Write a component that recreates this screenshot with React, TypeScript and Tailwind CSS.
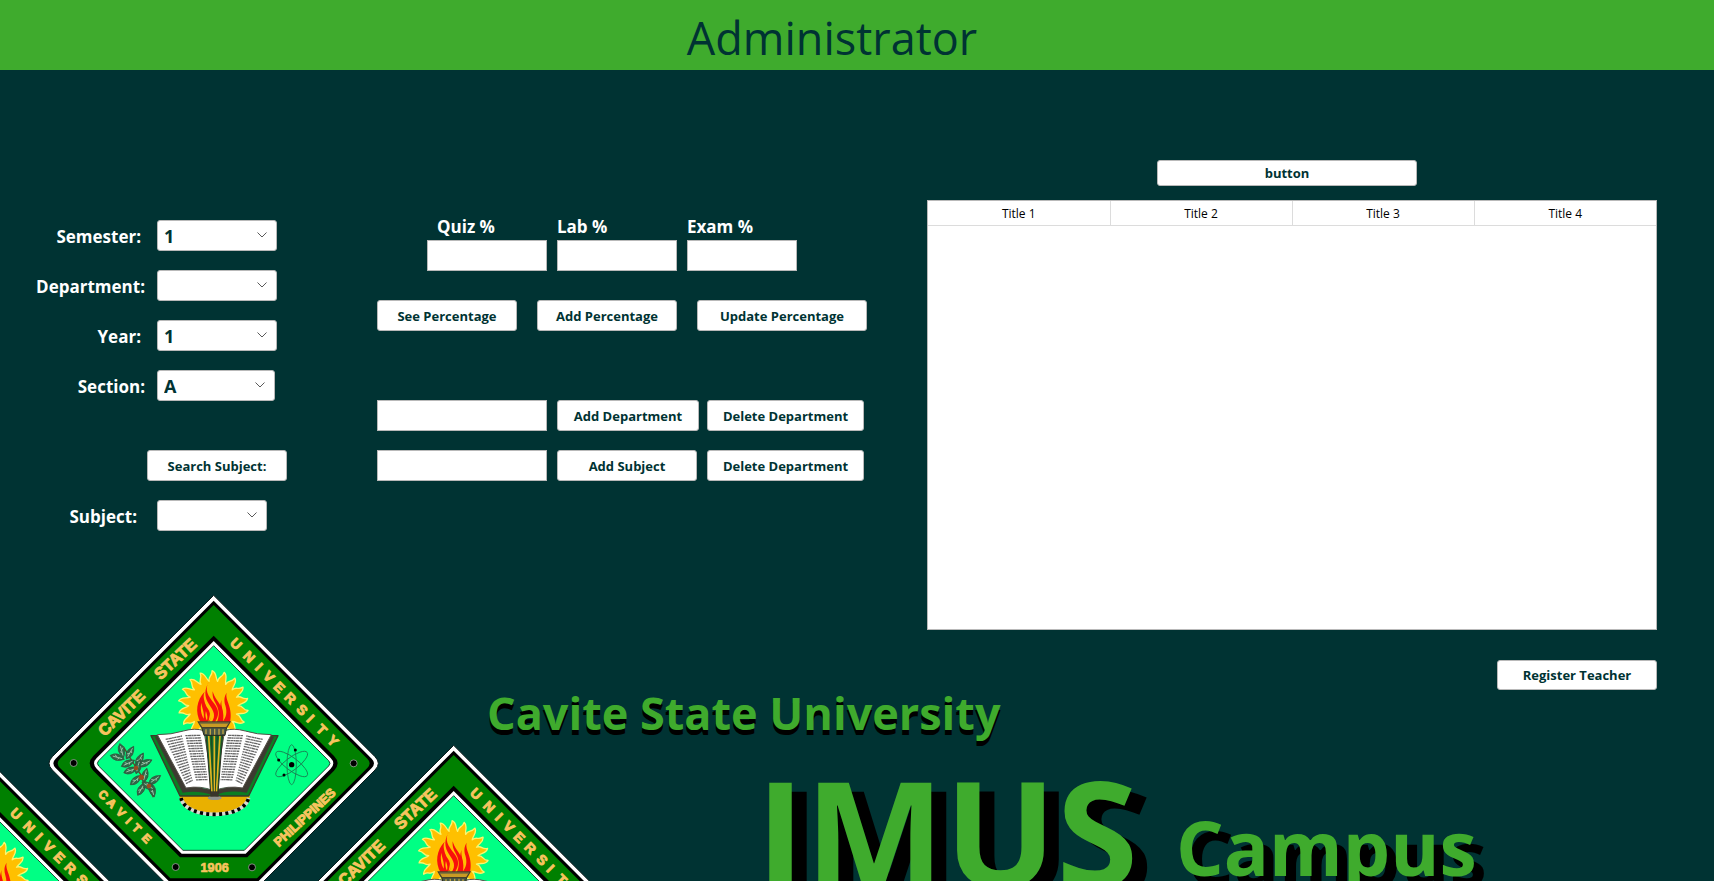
import React from "react";

const fieldBox = "h-[31px] border border-[#b9b9b9] bg-white text-[#003333]";

function ActionButton({ label, className = "" }: { label: string; className?: string }) {
  return (
    <button
      type="button"
      className={`rounded-[3px] border border-[#b9b9b9] bg-white pt-0.5 text-[13px] font-bold text-[#003333] whitespace-nowrap ${className}`}
    >
      {label}
    </button>
  );
}

type Choice = { id: string; label: string; options: string[]; gap: string; width: string };

function ChoiceRow({ id, label, options, gap, width }: Choice) {
  return (
    <div className="flex h-[31px] items-center">
      <label htmlFor={id} className={`w-[157px] pt-0.5 text-right text-[17px] font-bold text-white ${gap}`}>
        {label}
      </label>
      <div className={`relative ${width}`}>
        <select
          id={id}
          className={`${fieldBox} block w-full appearance-none rounded-[3px] pl-1.5 text-[18px] leading-none font-bold`}
        >
          {options.map((o) => (
            <option key={o}>{o}</option>
          ))}
        </select>
        <svg
          className="pointer-events-none absolute top-3 right-2.5 h-1.5 w-2.5"
          viewBox="0 0 10 6"
          fill="none"
          stroke="#5a5a5a"
          aria-hidden="true"
        >
          <path d="M0.5 0.5 L5 5 L9.5 0.5" />
        </svg>
      </div>
    </div>
  );
}

const choices: Choice[] = [
  { id: "semester", label: "Semester:", options: ["1", "2"], gap: "pr-4", width: "w-[120px]" },
  { id: "department", label: "Department:", options: [""], gap: "pr-3", width: "w-[120px]" },
  { id: "year", label: "Year:", options: ["1", "2", "3", "4"], gap: "pr-4", width: "w-[120px]" },
  { id: "section", label: "Section:", options: ["A", "B", "C"], gap: "pr-3", width: "w-[118px]" },
];

function PercentField({ id, label, pad, width }: { id: string; label: string; pad: string; width: string }) {
  return (
    <div className={`flex flex-col ${width}`}>
      <label htmlFor={id} className={`h-[27px] text-[17px] leading-[27px] font-bold text-white ${pad}`}>
        {label}
      </label>
      <input id={id} className={`${fieldBox} w-full px-2`} />
    </div>
  );
}

/* Diamond with a sharp top, rounded sides and a flat foot. */
function diamond(h: number, foot: number, r: number) {
  const x = 521;
  const y = 520;
  const w = h - (foot - y);
  return `M${x} ${y - h} L${x + h - r} ${y - r} Q${x + h} ${y} ${x + h - r} ${y + r} L${x + w} ${foot} L${x - w} ${foot} L${x - h + r} ${y + r} Q${x - h} ${y} ${x - h + r} ${y - r} Z`;
}

/* Sun disc with curved rays, all bending the same way. */
function sunPath() {
  const n = 18;
  const cx = 520;
  const cy = 347;
  const at = (r: number, a: number) => `${(cx + r * Math.cos(a)).toFixed(1)} ${(cy + r * Math.sin(a)).toFixed(1)}`;
  const step = (Math.PI * 2) / n;
  let d = `M${at(74, 0)}`;
  for (let i = 0; i < n; i++) {
    const a = i * step;
    d += ` C${at(92, a)} ${at(86, a + step * 0.4)} ${at(105, a + step * 0.4)} C${at(100, a + step * 0.8)} ${at(86, a + step * 0.7)} ${at(74, a + step)}`;
  }
  return d + "Z";
}

const leaves: [number, number, number][] = [
  [245, 482, 75], [270, 488, -60], [232, 502, 15], [264, 520, -25], [299, 508, -60], [272, 541, -20],
  [294, 530, -75], [316, 519, -25], [288, 570, -40], [315, 556, -75], [344, 569, -35], [304, 597, -60],
  [337, 600, 75], [325, 588, 30],
];

function Emblem() {
  return (
    <g id="emblem">
      <path d={diamond(504, 894, 20)} fill="#fff" stroke="#0b1c1c" strokeWidth="3" />
      <path d={diamond(488, 878, 14)} fill="#000" />
      <path d={diamond(475, 865, 14)} fill="#008000" />
      <path d={diamond(383, 802, 22)} fill="#000" />
      <path d={diamond(367, 791, 16)} fill="#fff" />
      <path d={diamond(353, 781, 8)} fill="#00ff84" stroke="#0b2b1c" strokeWidth="2.5" />

      <g
        fill="#f7c45f"
        stroke="#f7c45f"
        strokeWidth="3"
        fontFamily="'Liberation Sans', Arial, sans-serif"
        fontWeight="700"
        textAnchor="middle"
      >
        <text transform="translate(245 370) rotate(-44)" y="15" fontSize="48">CAVITE</text>
        <text transform="translate(407 208) rotate(-43)" y="15" fontSize="49">STATE</text>
        <text transform="translate(588 162) rotate(45)" x="0 55 97 139 184 230 280 316 363 411" y="14" fontSize="41">UNIVERSITY</text>
        <text transform="translate(190 615) rotate(45)" x="0 35 74 108 141 184" y="12" fontSize="35">CAVITE</text>
        <text transform="translate(794 682) rotate(-43)" y="13" fontSize="38">PHILIPPINES</text>
        <text x="524" y="846" fontSize="38" strokeWidth="2">1906</text>
      </g>

      {[[101, 519], [941, 520], [407, 831], [636, 832]].map(([x, y]) => (
        <circle key={x} cx={x} cy={y} r="10.5" fill="#000" stroke="#9aa59a" strokeWidth="2.5" />
      ))}

      <path d={sunPath()} fill="#ffc000" stroke="#fbf56e" strokeWidth="4" strokeLinejoin="round" />
      <g fill="#f8100c">
        <path d="M508 272 C490 300 506 318 522 340 C540 362 536 380 524 398 L514 398 C530 376 520 362 508 344 C492 320 492 300 508 272Z" />
        <path d="M494 305 C484 326 502 342 498 362 C494 378 498 388 506 398 L482 398 C464 366 470 330 494 305Z" />
        <path d="M518 304 C524 326 536 334 544 352 C552 370 546 388 540 398 L530 398 C538 380 538 366 532 350 C524 334 516 324 518 304Z" />
        <path d="M560 308 C554 332 580 350 570 398 L546 398 C560 382 562 366 556 346 C552 332 552 320 560 308Z" />
        <path d="M545 330 C540 350 556 366 548 398 L540 398 C546 372 534 356 545 330Z" />
        <path d="M494 340 C500 356 516 362 510 392 L500 394 C508 376 492 360 494 340Z" />
      </g>
      <path d="M484 338 C480 358 484 372 491 386 C494 366 486 356 484 338Z M508 362 C518 372 514 384 506 394 C508 380 512 372 508 362Z" fill="#ffc000" />

      {/* Gear */}
      <path d="M419 618 H630 C624 655 578 672 524 672 C470 672 424 655 419 618Z" fill="#e9b000" />
      <path d="M423 624 C430 656 474 673 524 673 C574 673 618 656 626 624" fill="none" stroke="#d8d8d0" strokeWidth="11" />
      <path d="M423 624 C430 656 474 673 524 673 C574 673 618 656 626 624" fill="none" stroke="#000" strokeWidth="11" strokeDasharray="9 10" />
      <path d="M430 618 H619 C608 651 568 665 524 665 C480 665 440 651 430 618Z" fill="#e9b000" />

      {/* Book */}
      <path d="M333 437 L360 437 L430 600 L615 600 L690 437 L714 437 L626 618 H420Z" fill="#0c7d22" stroke="#3a3a2a" strokeWidth="4" strokeLinejoin="round" />
      <path d="M345 441 L361 438 L438 590 Q480 588 520 604 Q560 588 606 590 L686 438 L702 441 L620 608 Q560 598 522 618 Q480 600 428 608Z" fill="#3d3a31" />
      <path d="M352 434 Q395 434 430 423 Q465 413 492 422 L520 602 Q482 586 438 594Z" fill="#fff" stroke="#56524a" strokeWidth="3" />
      <path d="M694 434 Q650 434 616 423 Q580 413 554 422 L524 602 Q562 586 608 594Z" fill="#fff" stroke="#56524a" strokeWidth="3" />
      <g fill="none" stroke="#666" strokeWidth="4" strokeDasharray="7 1 11 1 5 1">
        {Array.from({ length: 18 }, (_, i) => {
          const t = i * 7.8;
          return (
            <path
              key={i}
              d={`M${377 + t * 0.46} ${448 + t} L${426 + t * 0.24} ${438 + t} M${436 + t * 0.24} ${437 + t} L${482 + t * 0.16} ${436 + t} M${668 - t * 0.46} ${448 + t} L${619 - t * 0.24} ${438 + t} M${609 - t * 0.24} ${437 + t} L${563 - t * 0.16} ${436 + t}`}
            />
          );
        })}
      </g>

      {/* Torch */}
      <path d="M498 434 H548 L534 610 H512Z" fill="#126b2c" stroke="#2f2f22" strokeWidth="3" />
      <path d="M506 436 L516 606 M523 436 V606 M540 436 L529 606" stroke="#e3b322" strokeWidth="5" />
      <path d="M514 436 L520 606 M532 436 L526 606" stroke="#20351c" strokeWidth="2" />
      <path d="M485 412 H560 L555 436 H492Z" fill="#4b5a46" stroke="#26281e" strokeWidth="3" />
      <path d="M498 418 V432 M511 416 V434 M524 416 V434 M537 416 V434 M549 418 V432" stroke="#c0a443" strokeWidth="4" />
      <path d="M475 396 H570 L560 413 H485Z" fill="#c99b25" stroke="#45412c" strokeWidth="4" />
      <path d="M478 399 H567" stroke="#6a623c" strokeWidth="4" />
      <ellipse cx="524" cy="624" rx="21" ry="6" fill="#8f9390" />
      <path d="M511 604 H536 V620 H511Z" fill="#38352c" />

      {/* Coffee branch */}
      <path d="M250 470 Q275 512 290 535 Q320 580 340 622" fill="none" stroke="#5e4a2c" strokeWidth="4" />
      {leaves.map(([x, y, a]) => (
        <g key={`${x}-${y}`} transform={`translate(${x} ${y}) rotate(${a})`}>
          <path d="M-22 0 Q-4 -19 22 0 Q-4 19 -22 0Z" fill="#2d6b48" stroke="#37483a" strokeWidth="2" />
          <path d="M-14 0 H15 M-8 -6 L-2 0 M2 5 L6 0" stroke="#a9c9b2" strokeWidth="2.4" />
        </g>
      ))}
      <g fill="#9a4a1e">
        <circle cx="288" cy="534" r="7" />
        <circle cx="304" cy="562" r="8" />
        <circle cx="327" cy="588" r="7" />
      </g>

      {/* Atom */}
      <g fill="none" stroke="#1b7a50" strokeWidth="2.5">
        <ellipse cx="755" cy="524" rx="60" ry="14" transform="rotate(90 755 524)" />
        <ellipse cx="755" cy="522" rx="58" ry="19" transform="rotate(37 755 522)" />
        <ellipse cx="755" cy="522" rx="58" ry="19" transform="rotate(-37 755 522)" />
      </g>
      <circle cx="755" cy="524" r="8" />
      <circle cx="766" cy="480" r="4.5" />
      <circle cx="716" cy="510" r="4.5" />
      <circle cx="732" cy="555" r="4.5" />
    </g>
  );
}

function CampusArt() {
  return (
    <svg
      className="pointer-events-none absolute top-[520px] left-0 h-[291px] w-[620px]"
      viewBox="-120 0 1860 873"
      role="img"
      aria-label="Cavite State University seal"
    >
      <Emblem />
      <use href="#emblem" x="720" y="450" />
      <use href="#emblem" x="-660" y="510" />
    </svg>
  );
}

const columns = ["Title 1", "Title 2", "Title 3", "Title 4"];

export default function App() {
  return (
    <div className="flex h-screen flex-col overflow-hidden bg-[#003333] font-['Open_Sans','Noto_Sans',sans-serif]">
      <header className="flex h-[70px] shrink-0 items-center justify-center bg-[#3fab2d] pt-1 pr-[50px]">
        <h1 className="text-[45px] leading-none text-[#003333]">Administrator</h1>
      </header>

      <main className="relative flex-1">
        <CampusArt />

        <div className="relative flex items-start pr-[57px]">
          <form className="flex w-[377px] shrink-0 flex-col gap-[19px] pt-[150px]">
            {choices.map((c) => (
              <ChoiceRow key={c.id} {...c} />
            ))}
            <div className="mt-[30px] flex pl-[147px]">
              <ActionButton label="Search Subject:" className="h-[31px] w-[140px]" />
            </div>
            <ChoiceRow id="subject" label="Subject:" options={[""]} gap="pr-5" width="w-[110px]" />
          </form>

          <section className="w-[550px] shrink-0 pt-[143px]">
            <div className="flex gap-2.5 pl-[50px]">
              <PercentField id="quiz" label="Quiz %" pad="pl-2.5" width="w-[120px]" />
              <PercentField id="lab" label="Lab %" pad="pl-0" width="w-[120px]" />
              <PercentField id="exam" label="Exam %" pad="pl-0" width="w-[110px]" />
            </div>
            <div className="mt-[29px] flex gap-5">
              <ActionButton label="See Percentage" className="h-[31px] w-[140px]" />
              <ActionButton label="Add Percentage" className="h-[31px] w-[140px]" />
              <ActionButton label="Update Percentage" className="h-[31px] w-[170px]" />
            </div>
            <div className="mt-[69px] grid grid-cols-[170px_140px_157px] gap-x-2.5 gap-y-[19px]">
              <input aria-label="Department name" className={`${fieldBox} px-2`} />
              <ActionButton label="Add Department" className="h-[31px] w-[142px]" />
              <ActionButton label="Delete Department" className="h-[31px]" />
              <input aria-label="Subject name" className={`${fieldBox} px-2`} />
              <ActionButton label="Add Subject" className="h-[31px]" />
              <ActionButton label="Delete Department" className="h-[31px]" />
            </div>
          </section>

          <section className="flex flex-1 flex-col pt-[90px]">
            <ActionButton label="button" className="mr-2.5 h-[26px] w-[260px] self-center" />
            <div className="mt-3.5 h-[430px] border border-[#b9b9b9] bg-white">
              <table className="w-full table-fixed border-collapse text-xs text-black">
                <thead>
                  <tr className="h-6 border-b border-[#dcdcdc]">
                    {columns.map((c) => (
                      <th key={c} scope="col" className="border-r border-[#dcdcdc] p-0 pt-0.5 font-normal last:border-r-0">
                        {c}
                      </th>
                    ))}
                  </tr>
                </thead>
                <tbody />
              </table>
            </div>
            <ActionButton label="Register Teacher" className="mt-[30px] h-[30px] w-[160px] self-end" />
          </section>
        </div>

        <div className="relative font-bold text-[#3fab2d]">
          <h2 className="pl-[487px] text-[45px] leading-[46px] whitespace-nowrap [text-shadow:0_5px_0_#000]">
            Cavite State University
          </h2>
          <div className="mt-5 flex items-start gap-[38px] pl-[756px] whitespace-nowrap">
            <span className="text-[148px] leading-[150px] [text-shadow:15px_9px_0_#000]">IMUS</span>
            <span className="pt-[53px] text-[75px] leading-[76px] [text-shadow:10px_10px_0_#000]">Campus</span>
          </div>
        </div>
      </main>
    </div>
  );
}
